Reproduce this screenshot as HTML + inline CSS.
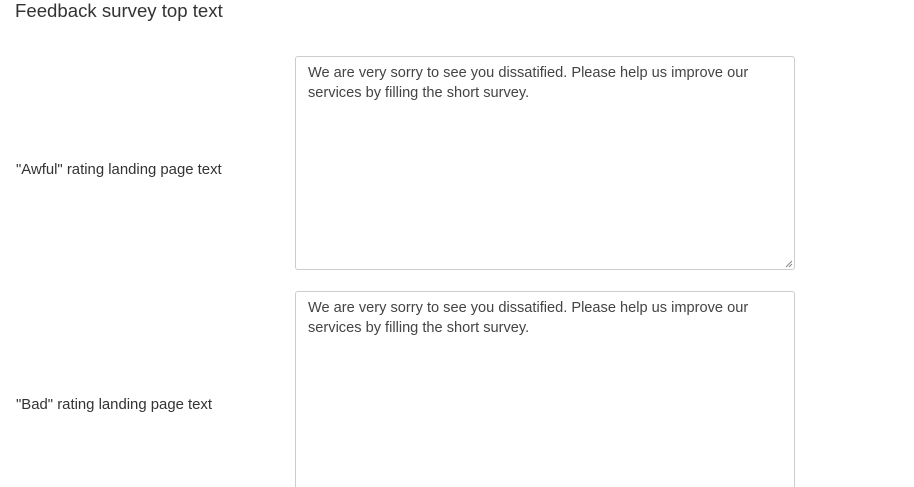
<!DOCTYPE html>
<html style="height:487px;overflow:hidden"><head><style>
body{margin:0;background:#fff;font-family:"Liberation Sans",sans-serif;color:#333;width:914px;height:487px;overflow:hidden;position:relative}
.t{position:absolute;left:15px;top:0px;font-size:18.6px;line-height:22px;color:#333}
.l{position:absolute;left:16px;font-size:14.9px;color:#333}
.ta{position:absolute;left:295px;width:500px;border:1px solid #ccc;border-radius:3px;padding:6px 12px;box-sizing:border-box;font-size:14.6px;line-height:20px;color:#444;overflow:hidden}
</style></head><body>
<div class="t">Feedback survey top text</div>
<div class="l" style="top:162px">"Awful" rating landing page text</div>
<div class="ta" style="top:56px;height:214px">We are very sorry to see you dissatified. Please help us improve our services by filling the short survey.
<svg style="position:absolute;right:1px;bottom:1px" width="8" height="8"><path d="M7 1L1 7M7 4L4 7" stroke="#888" stroke-width="1"/></svg></div>
<div class="l" style="top:397px">"Bad" rating landing page text</div>
<div class="ta" style="top:291px;height:196px;border-bottom:none;border-radius:3px 3px 0 0">We are very sorry to see you dissatified. Please help us improve our services by filling the short survey.</div>
</body></html>
